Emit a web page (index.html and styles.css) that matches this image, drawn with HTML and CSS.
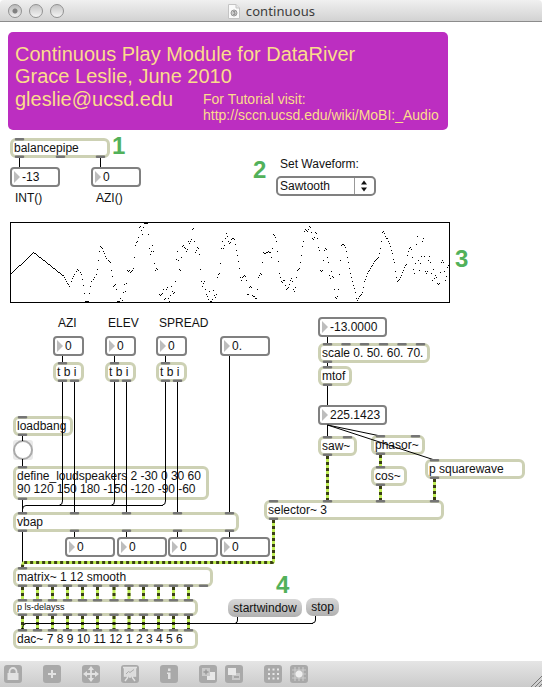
FILE: index.html
```html
<!DOCTYPE html>
<html lang="en">
<head>
<meta charset="utf-8">
<title>continuous</title>
<link rel="stylesheet" href="styles.css">
</head>
<body>
<div class="window">
  <header class="titlebar">
    <div class="lights"><i class="light dirty"></i><i class="light"></i><i class="light"></i></div>
    <div class="title">
      <svg class="doc" width="12" height="15" viewBox="0 0 12 15"><path d="M.5.5h7.500l3.500 3.500v10.500H.5z" fill="#fafafa" stroke="#c4c4c4"/><path d="M8 .5V4h3.500" fill="#e8e8e8" stroke="#c4c4c4"/><circle cx="6" cy="9" r="3" fill="#ccc" stroke="#999"/><path d="M5 7.500h2L6 9h1v1.500H5" fill="none" stroke="#888" stroke-width=".8"/></svg>
      <span>continuous</span>
    </div>
  </header>

  <main class="patcher">
    <section class="banner">
      <div class="line">Continuous Play Module for DataRiver</div>
      <div class="line">Grace Leslie, June 2010</div>
      <div class="foot">
        <div class="line mail">gleslie@ucsd.edu</div>
        <div class="link">For Tutorial visit:<br>http://sccn.ucsd.edu/wiki/MoBI:_Audio</div>
      </div>
    </section>

    <div class="step s1">1</div>
    <div class="step s2">2</div>
    <div class="step s3">3</div>
    <div class="step s4">4</div>

    <div class="obj balancepipe">balancepipe</div>
    <div class="num int">-13</div>
    <div class="num azi">0</div>
    <div class="label l-int">INT()</div>
    <div class="label l-azi">AZI()</div>

    <div class="label l-wave">Set Waveform:</div>
    <div class="menu"><span>Sawtooth</span><svg width="18" height="16" viewBox="0 0 18 16"><path d="M9 2.500l3 4H6zM9 13.500l3-4H6z" fill="#111"/></svg></div>

    <svg class="scope" width="440" height="81"><rect x=".5" y=".5" width="439" height="80" fill="#fff" stroke="#000"/><path id="trace" fill="#000"/></svg>

    <div class="label l-a">AZI</div>
    <div class="label l-e">ELEV</div>
    <div class="label l-s">SPREAD</div>
    <div class="num n1">0</div>
    <div class="num n2">0</div>
    <div class="num n3">0</div>
    <div class="num n4">0.</div>
    <div class="obj t1">t b i</div>
    <div class="obj t2">t b i</div>
    <div class="obj t3">t b i</div>
    <div class="obj loadbang">loadbang</div>
    <div class="bang"></div>
    <div class="obj define">define_loudspeakers 2 -30 0 30 60<br>90 120 150 180 -150 -120 -90 -60</div>
    <div class="obj vbap">vbap</div>
    <div class="num v1">0</div>
    <div class="num v2">0</div>
    <div class="num v3">0</div>
    <div class="num v4">0</div>
    <div class="obj matrix">matrix~ 1 12 smooth</div>
    <div class="obj delays">p ls-delayss</div>
    <div class="obj dac">dac~ 7 8 9 10 11 12 1 2 3 4 5 6</div>
    <div class="msg start">startwindow</div>
    <div class="msg stop">stop</div>

    <div class="num pitch">-13.0000</div>
    <div class="obj scale">scale 0. 50. 60. 70.</div>
    <div class="obj mtof">mtof</div>
    <div class="num freq">225.1423</div>
    <div class="obj saw">saw~</div>
    <div class="obj phasor">phasor~</div>
    <div class="obj cos">cos~</div>
    <div class="obj square">p squarewave</div>
    <div class="obj selector">selector~ 3</div>

    <svg class="wires" width="542" height="639" viewBox="0 22 542 639">
      <g class="cord">
        <path d="M19.500 158v9M100.500 158v9M62.500 356v6M114.500 356v6M165.500 356v6"/>
        <path d="M74.500 382v131M126.500 382v131M177.500 382v131M229.500 356v157"/>
        <path d="M62.500 382v119q0 4-3 4M114.500 382v119q0 4-3 4M165.500 382v119q0 4-3 4M163 505.500H26q-3.500 0-3.500 4v3"/>
        <path d="M22.500 436v5M22.500 459v8M22.500 500v13M22.500 532v36M74.500 532v5M126.500 532v5M177.500 532v5M229.500 532v5"/>
        <path d="M327.500 337v6M327.500 363v4M327.500 386v19M327.500 425v12"/>
        <path d="M327.500 425L380.500 436M327.500 425L434.500 460"/>
        <path d="M237.500 617v3q0 3-2 3M315.500 616v4q0 3-3 3M313 623.500H26q-3 0-3.500 5"/>
      </g>
      <g class="signal">
        <path id="sig" d="M327.500 456v45M380.500 455v12M380.500 486v15M434.500 479v22M273.500 520v41q0 1.500-1.500 1.500H24q-1.500 0-1.500 5"/>
        <path id="sig2" d="M22.500 587v13M37.500 587v13M52.500 587v13M67.500 587v13M82.500 587v13M97.500 587v13M114 587v13M129 587v13M143.500 587v13M158.500 587v13M173.500 587v13M188.500 587v13M22.500 616v14M37.500 616v14M52.500 616v14M67.500 616v14M82.500 616v14M97.500 616v14M114 616v14M129 616v14M143.500 616v14M158.500 616v14M173.500 616v14M188.500 616v14"/>
      </g>
      <g class="dash">
        <use href="#sig"/><use href="#sig2"/>
      </g>
      <path class="over" d="M22.500 630q0-6.500 3.500-6.500H200"/>
      <path class="ports" d="M16 139.300h7M16 156.800h7M57 156.800h7M97 156.800h7
        M59 363.300h7M59 380.800h7M71 380.800h7M111 363.300h7M111 380.800h7M123 380.800h7M162 363.300h7M162 380.800h7M174 380.800h7
        M19 417.300h7M19 434.800h7M19 467.300h7M19 498.800h7
        M19 513.300h7M71 513.300h7M123 513.300h7M174 513.300h7M226 513.300h7
        M19 530.800h7M71 530.800h7M123 530.800h7M174 530.800h7M226 530.800h7
        M324 344.300h7M342.500 344.300h7M361 344.300h7M380 344.300h7M398.500 344.300h7M417 344.300h7M324 361.800h7
        M324 367.300h7M324 384.800h7M324 437.300h7M344 437.300h7M324 454.800h7
        M377 436.300h7M412 436.300h7M377 453.800h7M377 467.300h7M377 484.800h7M431 460.300h7M431 477.800h7
        M270 501.300h7M324 501.300h7M377 501.300h7M431 501.300h7M270 518.800h7
        M19 568.300h7
        M19 585.800h7M34 585.800h7M49 585.800h7M64 585.800h7M79 585.800h7M94 585.800h7M110.500 585.800h7M125.500 585.800h7M140 585.800h7M155 585.800h7M170 585.800h7M185 585.800h7M200 585.800h7
        M19 600.300h7M34 600.300h7M49 600.300h7M64 600.300h7M79 600.300h7M94 600.300h7M110.500 600.300h7M125.500 600.300h7M140 600.300h7M155 600.300h7M170 600.300h7M185 600.300h7
        M19 614.800h7M34 614.800h7M49 614.800h7M64 614.800h7M79 614.800h7M94 614.800h7M110.500 614.800h7M125.500 614.800h7M140 614.800h7M155 614.800h7M170 614.800h7M185 614.800h7
        M19 630.300h7M34 630.300h7M49 630.300h7M64 630.300h7M79 630.300h7M94 630.300h7M110.500 630.300h7M125.500 630.300h7M140 630.300h7M155 630.300h7M170 630.300h7M185 630.300h7"/>
    </svg>
  </main>

  <footer class="toolbar">
    <svg class="tool" viewBox="0 0 18 18"><path d="M3.500 8h11v7h-11z" fill="#e2e2e2"/><path d="M5.500 8V6.500a3.500 3.500 0 0 1 7 0V8" fill="none" stroke="#e2e2e2" stroke-width="1.800"/></svg>
    <svg class="tool gap" viewBox="0 0 18 18"><path d="M9 5v8M5 9h8" stroke="#e2e2e2" stroke-width="2"/></svg>
    <svg class="tool gap" viewBox="0 0 18 18"><path d="M9 3v12M3 9h12" stroke="#e2e2e2" stroke-width="1.800"/><path d="M9 1l3 4H6zM9 17l3-4H6zM1 9l4-3v6zM17 9l-4-3v6z" fill="#e2e2e2"/></svg>
    <svg class="tool gap" viewBox="0 0 18 18"><path d="M2 2.500h14M3.500 3v8h11V3M9 11v2M7 12l-3 4M11 12l3 4" fill="none" stroke="#e2e2e2" stroke-width="1.400"/><path d="M3.500 3h11v8h-11z" fill="#dcdcdc"/><path d="M5 9l2.500-2.500 1.500 1L13 4.500" fill="none" stroke="#aaa"/></svg>
    <svg class="tool gap" viewBox="0 0 18 18"><path d="M8 3.500h2.500V6H8zM7 7.500h3.500V14H8V9H7z" fill="#e2e2e2"/></svg>
    <svg class="tool gap" viewBox="0 0 18 18"><path d="M8 7h8v8H8z" fill="#e8e8e8"/><path d="M3 3h8v8H3z" fill="#c9c9c9"/><path d="M7 4.500v5M4.500 7h5" stroke="#999" stroke-width="1.400"/></svg>
    <svg class="tool near" viewBox="0 0 18 18"><path d="M7 8h8v7H7z" fill="#c9c9c9"/><path d="M3 3h8v7H3z" fill="#e8e8e8"/><path d="M9 12h5" stroke="#999" stroke-width="1.400"/></svg>
    <svg class="tool gap" viewBox="0 0 18 18"><path d="M4 4.500h11M4 9h11M4 13.500h11" stroke="#e8e8e8" stroke-width="2" stroke-dasharray="2 2.500"/></svg>
    <svg class="tool near" viewBox="0 0 18 18"><path d="M5 2v14M9 2v14M13 2v14M2 5h14M2 9h14M2 13h14" stroke="#ccc" stroke-width="1.200"/><circle cx="9" cy="9" r="3.500" fill="#eee"/></svg>
    <svg class="grip" width="12" height="12" viewBox="0 0 12 12"><path d="M1 12L12 1M5 12l7-7M9 12l3-3" stroke="#777"/></svg>
  </footer>
</div>
<script src="scope.js"></script>
</body>
</html>
```
FILE: styles.css
```css
* { box-sizing: border-box; }
body { margin: 0; background: #fff; font-family: "Liberation Sans", sans-serif; font-size: 12px; color: #111; }
.window { width: 542px; height: 687px; display: flex; flex-direction: column; overflow: hidden; }

.titlebar { flex: none; height: 22px; position: relative; display: flex; align-items: center; justify-content: center;
  background: linear-gradient(#f0f0f0, #d2d2d2); border-bottom: 1px solid #8c8c8c; border-radius: 4px 4px 0 0; }
.lights { position: absolute; left: 8px; top: 4px; display: flex; gap: 7px; }
.light { width: 14px; height: 14px; border-radius: 50%; border: 1px solid #929292; background: linear-gradient(#c4c4c4, #f4f4f4); }
.dirty { background: radial-gradient(circle, #808080 0 2px, transparent 3px), linear-gradient(#bbb, #eee); }
.title { display: flex; align-items: center; gap: 6px; font: 13px "Noto Sans", sans-serif; color: #3c3c3c; padding-left: 1px; letter-spacing: .1px; }
.title .doc { margin-top: 1px; }

.patcher { flex: 1; position: relative; }

.banner { position: absolute; left: 8px; top: 10px; width: 440px; height: 98px; border-radius: 5px; background: #bc2ec1; color: #fbdc8c;
  padding: 11px 0 0 7px; white-space: nowrap; }
.line { font-size: 20px; line-height: 22px; }
.foot { display: flex; }
.mail { width: 188px; line-height: 24px; }
.link { font-size: 14px; line-height: 16px; padding-top: 4px; }

.step { position: absolute; font-weight: bold; font-size: 24px; line-height: 24px; color: #52b15a; }
.s1 { left: 112px; top: 112px; }
.s2 { left: 253px; top: 136px; }
.s3 { left: 455px; top: 225px; }
.s4 { left: 276px; top: 551px; }

.label { position: absolute; line-height: 14px; white-space: nowrap; }
.l-int { left: 15px; top: 169px; }
.l-azi { left: 96px; top: 169px; }
.l-wave { left: 280px; top: 135px; }
.l-a { left: 58px; top: 294px; }
.l-e { left: 108px; top: 294px; }
.l-s { left: 159px; top: 294px; }

.obj { position: absolute; height: 20px; border: 3px solid #cdd1b4; border-radius: 6px; background: #fff;
  padding: 1px 0 0 1px; line-height: 13px; white-space: nowrap; }
.balancepipe { left: 10px; top: 116px; width: 100px; }
.t1 { left: 53px; top: 340px; width: 31px; }
.t2 { left: 105px; top: 340px; width: 31px; }
.t3 { left: 156px; top: 340px; width: 31px; }
.loadbang { left: 13px; top: 394px; width: 60px; }
.define { left: 13px; top: 444px; width: 196px; height: 34px; letter-spacing: -.03px; }
.vbap { left: 13px; top: 490px; width: 226px; }
.matrix { left: 13px; top: 545px; width: 200px; }
.delays { left: 13px; top: 577px; width: 185px; height: 17px; font-size: 9px; line-height: 9px; }
.dac { left: 13px; top: 607px; width: 185px; }
.scale { left: 318px; top: 321px; width: 112px; }
.mtof { left: 318px; top: 344px; width: 34px; }
.saw { left: 318px; top: 414px; width: 39px; }
.phasor { left: 371px; top: 413px; width: 54px; }
.cos { left: 371px; top: 444px; width: 36px; }
.square { left: 425px; top: 437px; width: 100px; }
.selector { left: 264px; top: 478px; width: 180px; }

.num { position: absolute; width: 50px; height: 20px; border: 2px solid #808080; border-radius: 4px; background: #fff;
  padding-left: 10px; line-height: 16px; white-space: nowrap; }
.num::before { content: ""; position: absolute; left: 2px; top: 2px; border: 6px solid transparent; border-left-color: #bdbdbd; border-right: 0; }
.int { left: 10px; top: 145px; }
.azi { left: 91px; top: 145px; }
.n1 { left: 53px; top: 314px; width: 31px; }
.n2 { left: 105px; top: 314px; width: 31px; }
.n3 { left: 156px; top: 314px; width: 31px; }
.n4 { left: 220px; top: 314px; }
.v1 { left: 65px; top: 515px; }
.v2 { left: 117px; top: 515px; }
.v3 { left: 168px; top: 515px; }
.v4 { left: 220px; top: 515px; }
.pitch { left: 318px; top: 295px; width: 69px; }
.freq { left: 318px; top: 383px; width: 69px; }

.menu { position: absolute; left: 276px; top: 154px; width: 100px; height: 20px; border: 2px solid #808080; border-radius: 5px; display: flex; line-height: 16px; padding-left: 2px; }
.menu span { width: 75px; border-right: 1px solid #999; }

.bang { position: absolute; left: 13px; top: 418px; width: 20px; height: 20px; border-radius: 3px; background: #e9e9e9; display: grid; place-items: center; }
.bang::before { content: ""; width: 16px; height: 16px; border: 2px solid #aaa; border-radius: 50%; background: #fff; }

.msg { position: absolute; height: 18px; border-radius: 7px; background: linear-gradient(#d8d8d8, #b0b0b0); text-align: center; line-height: 18px; }
.start { left: 228px; top: 577px; width: 74px; }
.stop { left: 306px; top: 576px; width: 33px; }

.scope { position: absolute; left: 10px; top: 200px; }

.wires { position: absolute; left: 0; top: 0; pointer-events: none; fill: none; }
.cord, .over { stroke: #000; stroke-width: 1; }
.signal { stroke: #bfee55; stroke-width: 3; }
.dash { stroke: #3a3f14; stroke-width: 3; stroke-dasharray: 3 3; }
.ports { stroke: #757575; stroke-width: 2.600; stroke-linecap: round; }

.toolbar { flex: none; height: 26px; display: flex; align-items: flex-start; padding: 4px 0 0 4px; background: linear-gradient(#e5e5e5, #cbcbcb); position: relative; }
.tool { width: 18px; height: 18px; border-radius: 3px; background: #a9a9a9; }
.gap { margin-left: 21px; }
.near { margin-left: 8px; }
.grip { margin: 10px 0 0 auto; }
```
FILE: scope.js
```js
// Waveform samples as x,y pairs, in thirds of a pixel.
const ramp = [[33,189],[69,157],[100,127],[155,170],[190,197],[209,232]];
const dots = "214,214 218,205 221,199 224,192 228,184 232,178 236,182 240,188 244,193 247,208 250,226 253,250 256,274 259,274 262,274 265,274 268,250 272,228 275,214 279,208 283,201 288,192 292,178 295,150 298,124 301,108 305,112 308,116 311,124 314,131 317,138 320,146 324,150 328,155 332,157 334,181 337,200 340,229 343,226 346,223 349,238 352,274 355,274 358,274 362,265 367,271 370,247 373,223 376,244 379,220 382,181 385,184 388,182 391,187 394,184 397,181 400,175 403,142 406,107 409,98 412,95 415,82 418,52 421,49 424,61 427,73 430,52 433,39 436,39 439,39 442,39 445,73 448,115 451,133 454,124 457,106 460,124 463,160 466,181 469,175 472,178 478,253 481,256 484,254 487,250 490,238 493,268 496,265 499,238 502,232 505,265 508,274 511,256 514,229 517,244 520,250 523,247 526,214 529,148 532,124 535,150 538,178 541,181 544,142 547,109 550,106 553,112 556,115 559,124 562,118 565,94 568,101 571,94 574,88 577,58 580,55 583,94 586,127 589,121 592,112 595,115 598,133 601,178 604,214 607,229 610,220 613,214 616,238 619,253 622,259 625,268 628,244 631,274 634,274 637,268 640,241 643,256 646,262 649,253 652,202 655,193 658,190 661,160 664,115 667,94 670,115 673,106 676,85 679,70 682,79 685,94 688,100 691,96 694,88 697,85 700,86 703,88 706,103 709,121 712,136 715,154 718,175 721,202 724,211 727,202 730,199 733,196 736,199 739,211 742,253 745,254 748,232 751,229 754,233 757,256 760,259 763,260 766,265 769,265 772,238 775,202 778,196 781,190 784,194 787,157 790,127 793,130 796,130 799,127 802,127 805,124 808,127 811,127 814,142 817,115 820,73 823,76 826,81 829,94 832,124 835,154 838,190 841,202 844,214 847,217 850,212 853,211 856,226 859,238 862,235 865,232 868,223 871,211 874,205 877,214 880,238 883,244 886,232 889,202 892,181 895,178 898,175 901,157 904,136 907,109 910,94 913,64 916,59 919,61 922,64 925,58 928,49 931,52 934,67 937,85 940,88 943,82 946,67 949,70 952,85 955,112 958,121 961,181 964,184 967,180 970,151 973,121 976,115 979,118 982,142 985,157 988,196 991,204 994,184 997,199 1000,202 1003,238 1006,262 1009,265 1012,259 1015,238 1018,193 1021,151 1024,106 1027,103 1030,104 1033,106 1036,112 1039,124 1042,142 1045,157 1048,175 1051,190 1054,202 1057,214 1060,226 1063,235 1066,247 1069,265 1072,271 1075,265 1078,260 1081,256 1084,253 1087,247 1090,232 1093,214 1096,208 1099,199 1102,190 1105,185 1108,181 1111,176 1114,170 1117,166 1120,160 1123,154 1126,151 1129,148 1132,146 1135,142 1138,130 1141,115 1144,94 1147,67 1150,64 1153,70 1156,79 1159,84 1162,86 1165,94 1168,100 1171,109 1174,121 1177,130 1180,148 1183,157 1186,184 1189,202 1192,214 1195,211 1198,208 1201,203 1204,196 1207,187 1210,181 1213,172 1216,166 1219,163 1222,136 1225,124 1228,115 1231,112 1234,117 1237,142 1240,178 1243,190 1246,160 1249,103 1252,79 1255,151 1258,181 1261,160 1264,139 1267,94 1270,85 1273,139 1276,184 1279,190 1282,185 1285,151 1288,139 1291,157 1294,190 1297,211 1300,178 1303,204 1306,196 1309,202 1312,220 1315,223 1318,220 1321,187 1324,157 1327,151 1330,157 1333,184 1336,211 1339,199 1342,172 1345,166"
  .split(" ").map(p => p.split(",").map(Number));

const points = [];
for (let i = 0; i < ramp.length - 1; i++) {
  const [x0, y0] = ramp[i], [x1, y1] = ramp[i + 1];
  for (let x = x0; x < x1; x += 3) points.push([x, y0 + (y1 - y0) * (x - x0) / (x1 - x0)]);
}
points.push(...dots);

document.getElementById("trace").setAttribute("d",
  points.map(([x, y]) => `M${Math.floor(x / 3) - 10} ${Math.floor(y / 3) - 12}h1v1h-1z`).join(""));
```
